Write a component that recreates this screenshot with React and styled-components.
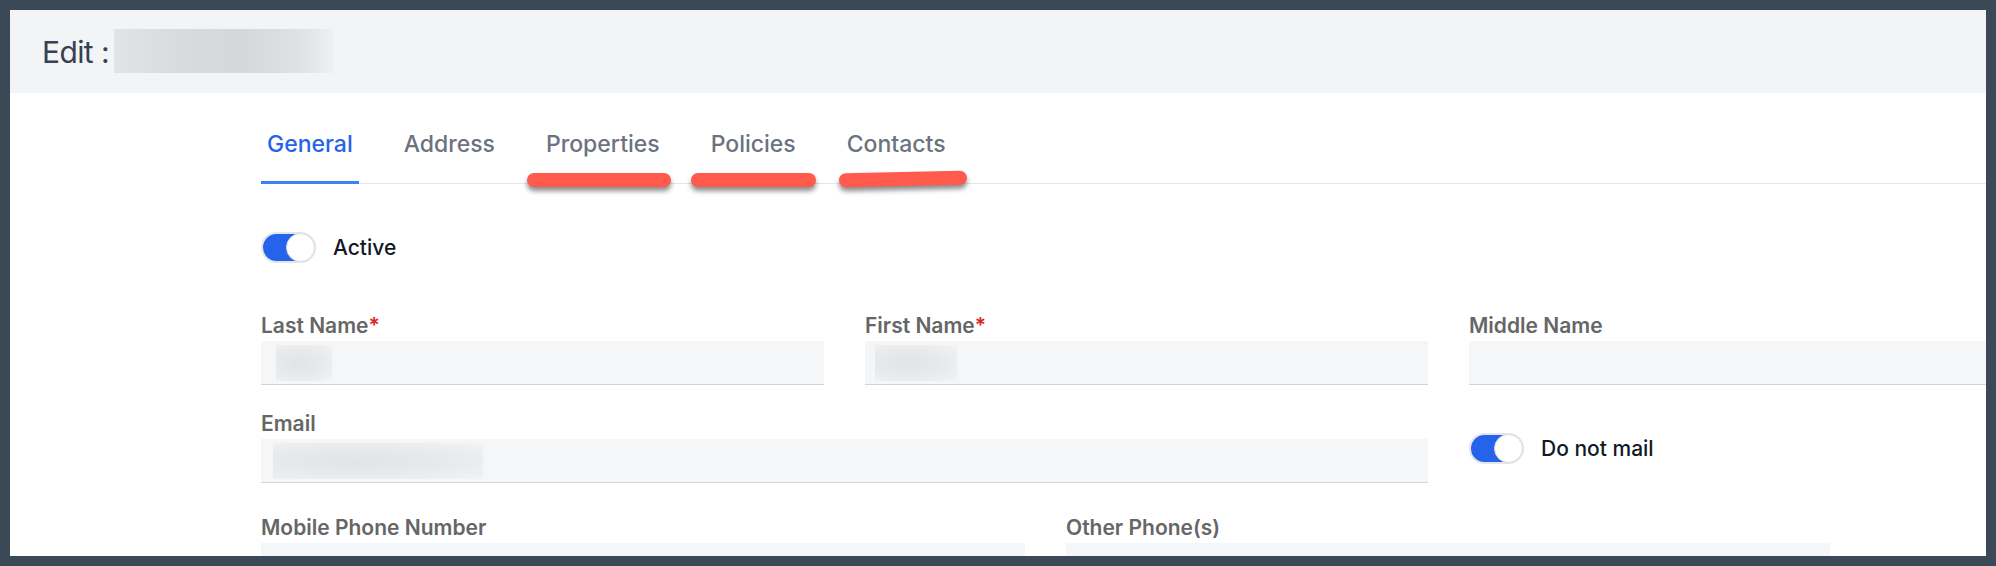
import React from 'react';
import styled, { createGlobalStyle } from 'styled-components';

const GlobalStyle = createGlobalStyle`
  * { box-sizing: border-box; }
  html, body {
    margin: 0;
    padding: 0;
    background: #3a4955;
    font-family: Inter, "Noto Sans", "Liberation Sans", sans-serif;
  }
`;

const Screen = styled.div`
  padding: 10px;
  height: 566px;
`;

const Frame = styled.div`
  position: relative;
  background: #ffffff;
  height: 546px;
  overflow: hidden;
`;

const Header = styled.header`
  height: 83px;
  background: #f3f4f6;
  display: flex;
  align-items: center;
  padding-left: 32px;
`;

const Title = styled.h1`
  margin: 0;
  font-size: 30px;
  font-weight: 400;
  color: #374151;
  letter-spacing: -0.6px;
`;

const Blurred = styled.span`
  display: inline-block;
  width: ${({ w }) => w}px;
  height: ${({ h }) => h}px;
  margin-left: ${({ ml }) => ml || 0}px;
  background: radial-gradient(ellipse at 55% 55%, #d4d5d8 0%, #dcdde0 45%, #eceef0 100%);
`;

const HeaderBlur = styled(Blurred)`
  margin-top: -1px;
  background: linear-gradient(90deg, #e2e3e6 0%, #d8d9dc 35%, #d6d7da 60%, #e0e1e4 85%, #eff0f2 100%);
`;

const TabBar = styled.nav`
  margin-left: 251px;
  height: 91px;
  display: flex;
  align-items: flex-end;
  gap: 39px;
  border-bottom: 1px solid #e5e7eb;
`;

const Tab = styled.div`
  padding: 0 6px 23px;
  margin-bottom: -1px;
  font-size: 23px;
  line-height: 28px;
  font-weight: 500;
  color: ${({ active }) => (active ? '#2563eb' : '#6b7280')};
  border-bottom: 3px solid ${({ active }) => (active ? '#3b82f6' : 'transparent')};
`;

const Mark = styled.span`
  position: absolute;
  left: ${({ x }) => x}px;
  top: ${({ y }) => y}px;
  width: ${({ w }) => w}px;
  height: 14px;
  border-radius: 7px;
  background: #ff5a4c;
  box-shadow: 0 4px 5px rgba(0, 0, 0, 0.45);
  transform: rotate(${({ r }) => r || 0}deg);
`;

const Form = styled.section`
  padding-left: 251px;
`;

const SwitchRow = styled.div`
  display: flex;
  align-items: center;
  gap: 17px;
  margin-top: ${({ mt }) => mt || 0}px;
  margin-bottom: ${({ mb }) => mb || 0}px;
`;

const Track = styled.span`
  position: relative;
  display: inline-block;
  width: 55px;
  height: 31px;
  border-radius: 16px;
  background: #2563eb;
  border: 2px solid #e3e5ea;
`;

const Knob = styled.span`
  position: absolute;
  right: -1px;
  top: -1px;
  width: 29px;
  height: 29px;
  border-radius: 50%;
  background: #ffffff;
  border: 1px solid #d9dce2;
`;

const SwitchLabel = styled.span`
  font-size: 21px;
  font-weight: 500;
  color: #111827;
`;

const Row = styled.div`
  display: grid;
  grid-template-columns: ${({ cols }) => cols};
  column-gap: 41px;
  align-items: end;
  margin-top: ${({ mt }) => mt}px;
`;

const Field = styled.div`
  display: flex;
  flex-direction: column;
`;

const Label = styled.label`
  font-size: 21px;
  line-height: 24px;
  font-weight: 600;
  color: #666666;
  margin-bottom: 3px;
`;

const Required = styled.span`
  color: #dc2626;
`;

const Input = styled.div`
  height: 44px;
  background: #f5f6f8;
  border-bottom: 1px solid #d1d5db;
  padding: 4px 0 0 ${({ pl }) => pl || 14}px;
`;

const InputBlur = styled(Blurred)`
  background: radial-gradient(ellipse at 40% 50%, #e2e3e5 0%, #e9eaec 55%, #f2f3f5 100%);
`;

const Switch = ({ label, mt, mb }) => (
  <SwitchRow mt={mt} mb={mb}>
    <Track>
      <Knob />
    </Track>
    <SwitchLabel>{label}</SwitchLabel>
  </SwitchRow>
);

const tabs = ['General', 'Address', 'Properties', 'Policies', 'Contacts'];

const App = () => (
  <>
    <GlobalStyle />
    <Screen>
      <Frame>
        <Header>
          <Title>Edit :</Title>
          <HeaderBlur w={220} h={44} ml={5} />
        </Header>
        <TabBar>
          {tabs.map(name => (
            <Tab key={name} active={name === 'General'}>
              {name}
            </Tab>
          ))}
        </TabBar>
        <Mark x={517} y={163} w={144} />
        <Mark x={681} y={163} w={125} />
        <Mark x={829} y={162} w={128} r={-1.2} />

        <Form>
          <Switch label="Active" mt={48} />

          <Row cols="563px 563px 563px" mt={51}>
            <Field>
              <Label>
                Last Name<Required>*</Required>
              </Label>
              <Input pl={15}>
                <InputBlur w={56} h={36} />
              </Input>
            </Field>
            <Field>
              <Label>
                First Name<Required>*</Required>
              </Label>
              <Input pl={10}>
                <InputBlur w={82} h={36} />
              </Input>
            </Field>
            <Field>
              <Label>Middle Name</Label>
              <Input />
            </Field>
          </Row>

          <Row cols="1167px 400px" mt={27}>
            <Field>
              <Label>Email</Label>
              <Input pl={12}>
                <InputBlur w={210} h={36} />
              </Input>
            </Field>
            <Switch label="Do not mail" mb={19} />
          </Row>

          <Row cols="764px 764px" mt={33}>
            <Field>
              <Label>Mobile Phone Number</Label>
              <Input />
            </Field>
            <Field>
              <Label>Other Phone(s)</Label>
              <Input />
            </Field>
          </Row>
        </Form>
      </Frame>
    </Screen>
  </>
);

export default App;
